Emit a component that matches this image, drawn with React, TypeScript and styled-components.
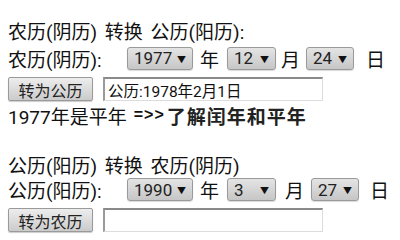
import React from 'react'
import styled, { createGlobalStyle } from 'styled-components'

const GlobalStyle = createGlobalStyle`
  html, body {
    margin: 0;
    padding: 0;
    background: #ffffff;
  }
  body {
    font-family: Roboto, "Noto Sans CJK SC", sans-serif;
    color: #111111;
    overflow: hidden;
  }
`

const Page = styled.div`
  width: 400px;
  height: 240px;
  padding: 17px 0 0 8px;
  box-sizing: border-box;
  display: flex;
  flex-direction: column;
  overflow: hidden;
`

type RowProps = { $h: number; $top?: number }

const Line = styled.div<RowProps>`
  flex-shrink: 0;
  height: ${(p) => p.$h}px;
  margin-top: ${(p) => p.$top || 0}px;
  display: flex;
  align-items: center;
  font-size: 19px;
  word-spacing: 3px;
  white-space: nowrap;
`

const Label = styled.span`
  width: 119px;
  flex-shrink: 0;
`

const Word = styled.span<{ $ml?: number }>`
  margin-left: ${(p) => p.$ml || 0}px;
`

const SelectBox = styled.span<{ $w: number; $ml: number }>`
  position: relative;
  display: inline-flex;
  flex-shrink: 0;
  margin-left: ${(p) => p.$ml}px;
  width: ${(p) => p.$w}px;
  height: 23px;
`

const NativeSelect = styled.select`
  appearance: none;
  width: 100%;
  height: 100%;
  margin: 0;
  padding: 0 0 0 6px;
  border: 1px solid #9a9a9a;
  border-radius: 3px;
  background: linear-gradient(#e4e4e4, #c6c6c6);
  font-family: Roboto, "Noto Sans CJK SC", sans-serif;
  font-size: 17px;
  color: #222222;
  box-shadow: 0 1px 1px rgba(0, 0, 0, 0.15);
`

const Arrow = styled.span`
  position: absolute;
  right: 7px;
  top: 6px;
  font-size: 9px;
  color: #111111;
  pointer-events: none;
`

const Button = styled.button`
  flex-shrink: 0;
  width: 85px;
  height: 24px;
  margin: 0;
  padding: 0;
  border: 1px solid #9a9a9a;
  border-radius: 2px;
  background: linear-gradient(#ededed, #cbcbcb);
  font-family: "Noto Sans CJK SC", sans-serif;
  font-size: 16px;
  color: #222222;
  box-shadow: 0 1px 1px rgba(0, 0, 0, 0.2);
`

const Result = styled.input`
  flex-shrink: 0;
  width: 220px;
  height: 24px;
  margin: 0 0 0 10px;
  padding: 0 0 0 3px;
  box-sizing: border-box;
  border: 1px solid #dcdcdc;
  border-top: 2px solid #8a8a8a;
  border-left: 2px solid #9a9a9a;
  background: #ffffff;
  font-family: Roboto, "Noto Sans CJK SC", sans-serif;
  font-size: 15.5px;
  color: #111111;
  outline: none;
`

const Link = styled.a`
  font-weight: bold;
  letter-spacing: 1px;
  color: #222222;
  text-decoration: none;
`

const Arrows = styled.span`
  font-family: "Liberation Sans", sans-serif;
  font-size: 16px;
  font-weight: bold;
  letter-spacing: 1px;
  margin: 0 2px 0 7px;
`

type Sel = { value: string; w: number; ml: number }

function Select({ value, w, ml }: Sel) {
  return (
    <SelectBox $w={w} $ml={ml}>
      <NativeSelect defaultValue={value}>
        <option value={value}>{value}</option>
      </NativeSelect>
      <Arrow>▼</Arrow>
    </SelectBox>
  )
}

export default function App() {
  return (
    <>
      <GlobalStyle />
      <Page>
        <Line $h={26}>农历(阴历) 转换 公历(阳历):</Line>
        <Line $h={30}>
          <Label>农历(阴历):</Label>
          <Select value="1977" w={66} ml={0} />
          <Word $ml={7}>年</Word>
          <Select value="12" w={49} ml={8} />
          <Word $ml={5}>月</Word>
          <Select value="24" w={48} ml={6} />
          <Word $ml={12}>日</Word>
        </Line>
        <Line $h={32}>
          <Button>转为公历</Button>
          <Result readOnly defaultValue="公历:1978年2月1日" />
        </Line>
        <Line $h={20}>
          <Word>1977年是平年</Word>
          <Arrows>=&gt;&gt;</Arrows>
          <Link href="#">了解闰年和平年</Link>
        </Line>

        <Line $h={26} $top={26}>公历(阳历) 转换 农历(阴历)</Line>
        <Line $h={25}>
          <Label>公历(阳历):</Label>
          <Select value="1990" w={66} ml={0} />
          <Word $ml={7}>年</Word>
          <Select value="3" w={49} ml={8} />
          <Word $ml={9}>月</Word>
          <Select value="27" w={48} ml={7} />
          <Word $ml={11}>日</Word>
        </Line>
        <Line $h={36}>
          <Button>转为农历</Button>
          <Result readOnly defaultValue="" />
        </Line>
      </Page>
    </>
  )
}
